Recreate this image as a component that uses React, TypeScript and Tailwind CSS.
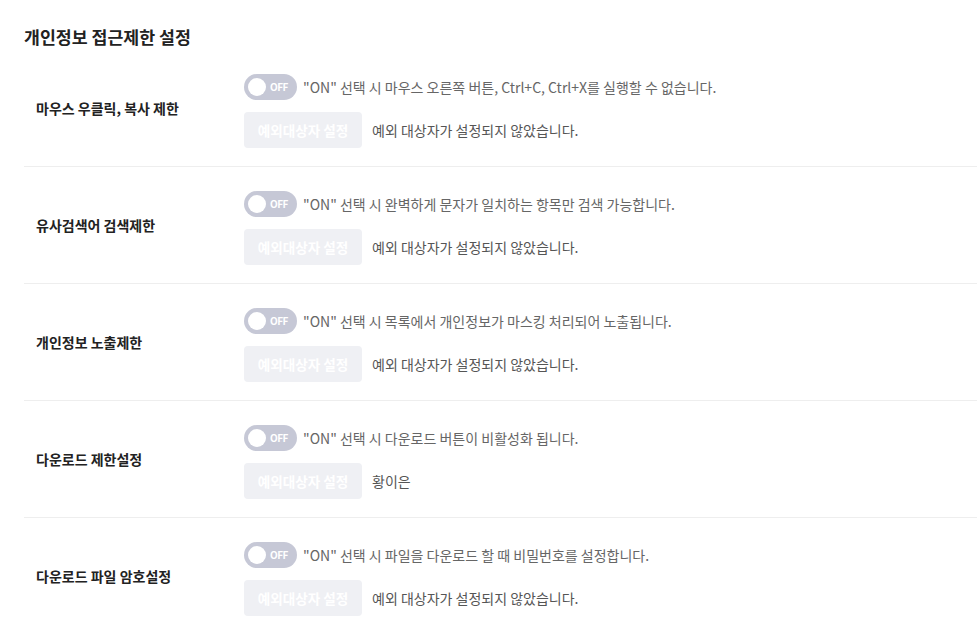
import React from "react";

const rows = [
  { label: "마우스 우클릭, 복사 제한", desc: "\"ON\" 선택 시 마우스 오른쪽 버튼, Ctrl+C, Ctrl+X를 실행할 수 없습니다.", exc: "예외 대상자가 설정되지 않았습니다." },
  { label: "유사검색어 검색제한", desc: "\"ON\" 선택 시 완벽하게 문자가 일치하는 항목만 검색 가능합니다.", exc: "예외 대상자가 설정되지 않았습니다." },
  { label: "개인정보 노출제한", desc: "\"ON\" 선택 시 목록에서 개인정보가 마스킹 처리되어 노출됩니다.", exc: "예외 대상자가 설정되지 않았습니다." },
  { label: "다운로드 제한설정", desc: "\"ON\" 선택 시 다운로드 버튼이 비활성화 됩니다.", exc: "황이은" },
  { label: "다운로드 파일 암호설정", desc: "\"ON\" 선택 시 파일을 다운로드 할 때 비밀번호를 설정합니다.", exc: "예외 대상자가 설정되지 않았습니다." },
];

function Toggle() {
  return (
    <div className="relative flex h-[26px] w-[53px] items-center rounded-full bg-[#c6c8d6]">
      <div className="ml-[4px] h-[18px] w-[18px] rounded-full bg-white" />
      <span className="ml-[4px] text-[10px] font-bold leading-none tracking-[-0.5px] text-white">OFF</span>
    </div>
  );
}

export default function App() {
  return (
    <div className="min-h-screen bg-white pl-[24px] pt-[24px] font-['Noto_Sans_CJK_KR','Noto_Sans',sans-serif]">
      <h1 className="h-[26px] text-[17.3px] font-bold leading-[26px] text-[#222]">개인정보 접근제한 설정</h1>
      <div>
        {rows.map((r, i) => (
          <div key={i} className={`flex items-center ${i < rows.length - 1 ? "border-b border-[#eeeeee]" : ""}`}>
            <div className="w-[220px] pl-[12px] text-[14px] font-semibold text-[#222]">{r.label}</div>
            <div className="flex flex-col gap-[12px] pb-[18px] pt-[24px]">
              <div className="flex items-center gap-[6px]">
                <Toggle />
                <span className="text-[14px] text-[#666]">{r.desc}</span>
              </div>
              <div className="flex items-center gap-[10px]">
                <div className="flex h-[36px] w-[118px] items-center justify-center rounded-[4px] bg-[#eff0f4] text-[13.6px] font-bold text-white">예외대상자 설정</div>
                <span className="text-[14px] text-[#555]">{r.exc}</span>
              </div>
            </div>
          </div>
        ))}
      </div>
    </div>
  );
}
